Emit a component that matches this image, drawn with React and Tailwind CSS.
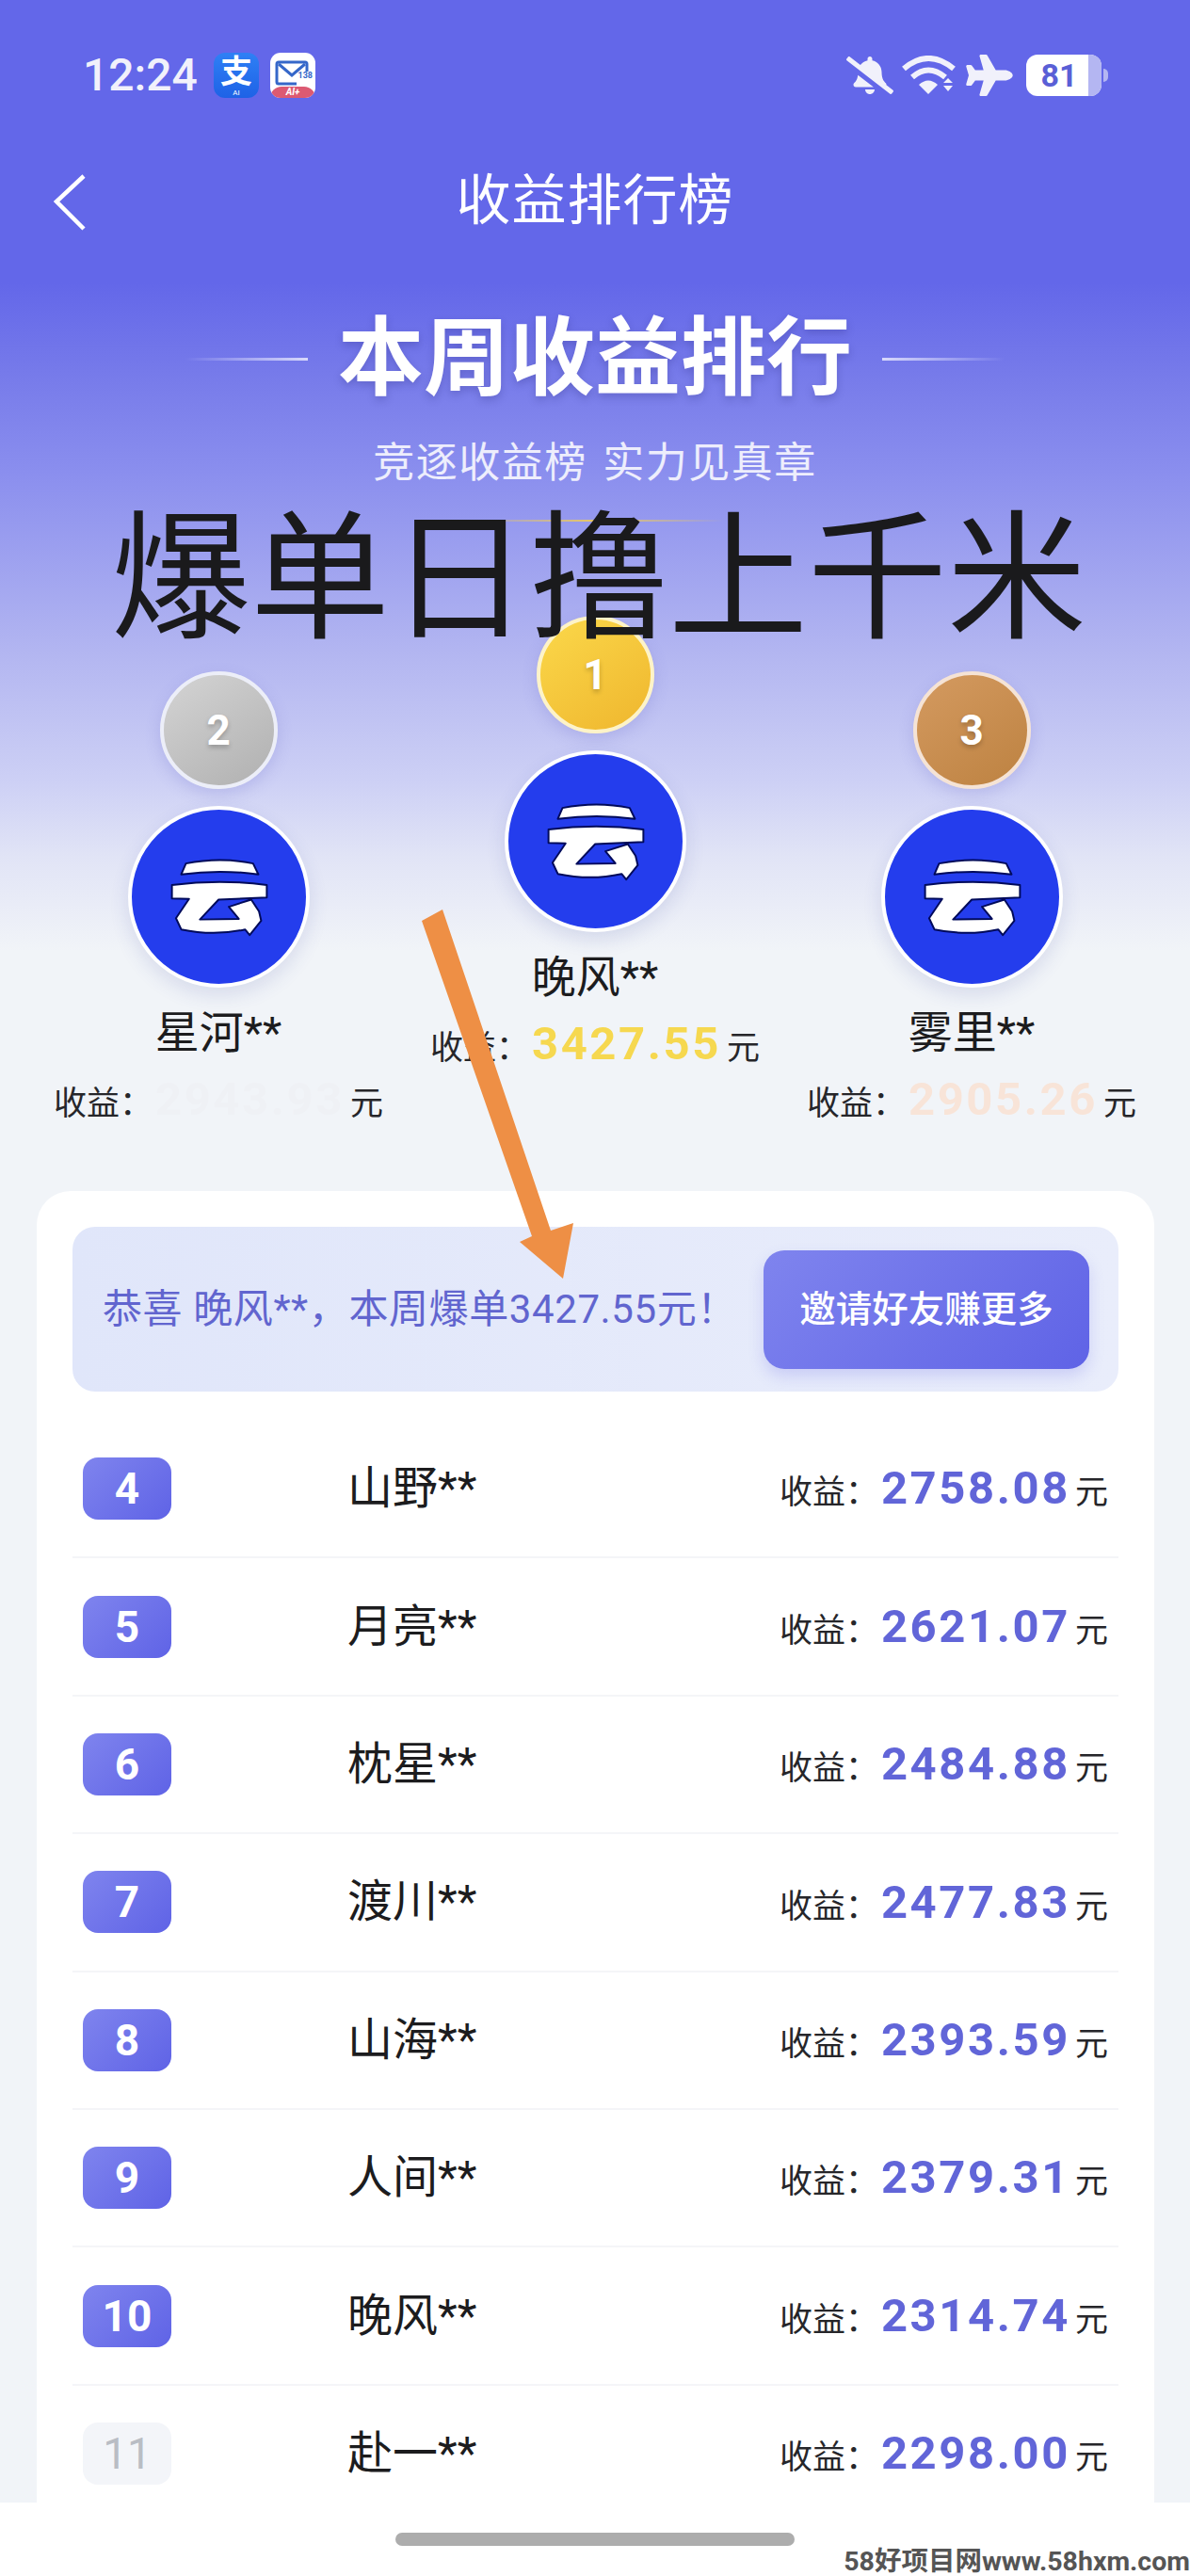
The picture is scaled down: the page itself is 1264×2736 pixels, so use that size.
import React from "react";
import { FaBellSlash, FaPlane } from "react-icons/fa";

const rows = [
  ["4", "山野**", "2758.08"],
  ["5", "月亮**", "2621.07"],
  ["6", "枕星**", "2484.88"],
  ["7", "渡川**", "2477.83"],
  ["8", "山海**", "2393.59"],
  ["9", "人间**", "2379.31"],
  ["10", "晚风**", "2314.74"],
  ["11", "赴一**", "2298.00"],
];

function Logo() {
  return (
    <svg viewBox="56 473 560 560" className="w-full h-full">
      <g fill="#ffffff" stroke="#000a5a" strokeWidth="6" strokeLinejoin="round">
        <path d="M215 681 L230 646 Q340 624 446 646 L463 681 Q340 664 215 681Z" />
        <path d="M185 715 Q340 695 490 715 L490 755 L335 762 L275 826 L400 824 L368 785 L440 762 L465 800 L472 830 L435 876 L420 858 Q320 880 215 858 L198 822 L240 760 L185 758Z" />
      </g>
    </svg>
  );
}

function Medal({ n, cls, ring }) {
  return (
    <div className={`w-[125px] h-[125px] rounded-full border-[4px] ${ring} ${cls} flex items-center justify-center shadow-[0_6px_16px_rgba(99,102,200,0.22)]`}>
      <span className="text-white font-bold text-[44px] leading-none [text-shadow:0_3px_5px_rgba(0,0,0,0.22)]">{n}</span>
    </div>
  );
}

function Podium({ n, cls, ring, name, value, color, top }) {
  return (
    <div className={`flex flex-col items-center ${top}`}>
      <Medal n={n} cls={cls} ring={ring} />
      <div className="mt-[18px] w-[193px] h-[193px] rounded-full border-[4px] border-white bg-[#243ded] shadow-[0_8px_20px_rgba(60,70,160,0.14)] overflow-hidden">
        <Logo />
      </div>
      <div className="mt-[18px] h-[60px] leading-[60px] text-[47px] text-[#1c1c1e]">{name}</div>
      <div className="mt-[4px] h-[60px] flex items-baseline justify-center whitespace-nowrap text-[#26262a]">
        <span className="text-[35px] mr-[18px] w-[90px]">收益：</span>
        <span className={`text-[49px] font-bold tracking-[2.6px] ${color}`}>{value}</span>
        <span className="text-[35px] ml-[6px]">元</span>
      </div>
    </div>
  );
}

export default function App() {
  return (
    <div className="relative w-[1264px] h-[2736px] overflow-hidden bg-[#f1f4f8] font-[Roboto,'Noto_Sans_CJK_SC',sans-serif]">
      <div className="absolute inset-x-0 top-0 h-[1010px] bg-[linear-gradient(180deg,#6367e9_0px,#6367e9_300px,#777bea_400px,#8a8eee_500px,#b4b7f1_700px,#cdd0f5_830px,#e1e4f6_910px,#f1f4f8_1010px)]" />

      <div className="relative">
        {/* status bar */}
        <div className="h-[160px] flex items-center justify-between pl-[88px] pr-[87px]">
          <div className="flex items-center">
            <span className="text-[48px] font-medium text-[#f1f1fb] leading-none w-[139px]">12:24</span>
            <div className="relative w-[48px] h-[48px] rounded-[12px] bg-[linear-gradient(180deg,#2f80f5,#1e62e6)] flex items-start justify-center overflow-hidden">
              <span className="text-white font-bold text-[34px] leading-[40px]">支</span>
              <span className="absolute bottom-0 text-white text-[8px] leading-[10px]">AI</span>
            </div>
            <div className="relative ml-[12px] w-[48px] h-[48px] rounded-[11px] bg-white overflow-hidden">
              <svg viewBox="0 0 48 48" className="absolute inset-0 w-full h-full">
                <path d="M37 10 H9 a2 2 0 0 0-2 2 V31 a2 2 0 0 0 2 2 H28" fill="none" stroke="#3567c9" strokeWidth="3" />
                <path d="M9 12 L23 24 L37 12" fill="none" stroke="#3567c9" strokeWidth="3" />
                <path d="M37 10 a2 2 0 0 1 2 2 V20" fill="none" stroke="#3567c9" strokeWidth="3" />
              </svg>
              <span className="absolute right-[3px] top-[19px] text-[9px] leading-[10px] font-bold text-[#3567c9]">138</span>
              <div className="absolute inset-x-0 bottom-0 h-[12px] rounded-t-[12px] bg-[#dc5a72] text-center text-white text-[10px] leading-[12px] font-bold italic">AI+</div>
            </div>
          </div>
          <div className="flex items-center">
            <FaBellSlash className="w-[50px] h-[44px] text-[#f1f1fb]" />
            <svg viewBox="0 0 60 42" className="ml-[8px] w-[60px] h-[42px]">
              <g fill="none" stroke="#f1f1fb" strokeWidth="6">
                <path d="M3 14 Q29 -8 56 14" />
                <path d="M12 23 Q29 8 47 23" />
              </g>
              <path d="M19 31 Q29 22 39 31 L29 41Z" fill="#f1f1fb" />
              <path d="M50 24 L55 29 H45Z M45 32 H55 L50 38Z" fill="#f1f1fb" />
            </svg>
            <FaPlane className="ml-[8px] w-[52px] h-[44px] text-[#f1f1fb]" />
            <div className="ml-[13px] flex items-center">
              <div className="relative w-[80px] h-[44px] rounded-[12px] bg-white overflow-hidden flex items-center justify-center pr-[10px]">
                <span className="text-[#5a5fd6] text-[34px] font-bold leading-none">81</span>
                <div className="absolute right-0 inset-y-0 w-[14px] bg-[#b4b6f2]" />
              </div>
              <div className="ml-[2px] w-[5px] h-[14px] rounded-r-full bg-[#b4b6f2]" />
            </div>
          </div>
        </div>

        {/* nav */}
        <div className="relative h-[106px] flex items-center justify-center">
          <svg viewBox="0 0 36 62" className="absolute left-[56px] top-[24px] w-[36px] h-[62px]">
            <path d="M33 3 L4 30 L33 59" fill="none" stroke="#ffffff" strokeWidth="4.5" />
          </svg>
          <span className="text-[58px] tracking-[1px] text-white leading-none">收益排行榜</span>
        </div>

        {/* heading */}
        <div className="mt-[65px] h-[100px] flex items-center justify-center">
          <div className="w-[130px] h-[3px] bg-[linear-gradient(90deg,transparent,#d8d9fb)]" />
          <span className="mx-[32px] text-[91px] leading-none font-bold text-white [text-shadow:0_4px_8px_rgba(40,40,120,0.25)]">本周收益排行</span>
          <div className="w-[130px] h-[3px] bg-[linear-gradient(90deg,#d8d9fb,transparent)]" />
        </div>
        <div className="mt-[31px] h-[60px] leading-[60px] text-center text-[44px] tracking-[1.5px] [word-spacing:4px] text-white/85">竞逐收益榜 实力见真章</div>
        <div className="mt-[30px] mx-auto w-[274px] h-[2px] bg-[linear-gradient(90deg,transparent,#e8c765,transparent)]" />

        {/* podium */}
        <div className="mt-[100px] px-[32px] grid grid-cols-3">
          <Podium top="pt-[59px]" n="2" cls="bg-[linear-gradient(145deg,#d4d4d4,#b0b0b0)]" ring="border-[#eceef8]" name="星河**" value="2943.93" color="text-[#eff1f5]" />
          <Podium top="" n="1" cls="bg-[linear-gradient(145deg,#fbd84a,#efb62e)]" ring="border-[#fdf3c8]" name="晚风**" value="3427.55" color="text-[#f6d84f]" />
          <Podium top="pt-[59px]" n="3" cls="bg-[linear-gradient(145deg,#d49a60,#bd8241)]" ring="border-[#f5e3d5]" name="雾里**" value="2905.26" color="text-[#f8e4d8]" />
        </div>

        {/* card */}
        <div className="mt-[74px] mx-[39px] w-[1187px] rounded-t-[36px] bg-white pt-[38px] px-[38px]">
          <div className="h-[175px] rounded-[24px] bg-[linear-gradient(90deg,#e0e6fa,#e9edfb)] flex items-center justify-between pl-[32px] pr-[31px]">
            <span className="text-[42px] tracking-[0.6px] text-[#6165cf] whitespace-nowrap">恭喜 晚风**，本周爆单3427.55元！</span>
            <div className="w-[346px] h-[126px] rounded-[22px] bg-[linear-gradient(135deg,#7f84ee,#5f63e6)] shadow-[0_8px_16px_rgba(99,102,230,0.22)] flex items-center justify-center text-white text-[38.5px] font-medium">邀请好友赚更多</div>
          </div>
          <div className="mt-[31px]">
            {rows.map(([n, name, value], i) => (
              <div key={n} className="h-[146.4px] flex items-center border-b-2 border-[#f4f5f8]">
                <div className={`ml-[11px] w-[94px] h-[66px] rounded-[16px] flex items-center justify-center text-[46px] leading-none ${i === 7 ? "bg-[#f3f5f9] text-[#b9bdc4]" : "bg-[linear-gradient(135deg,#7f84ee,#5f63e6)] text-white font-bold"}`}>{n}</div>
                <div className="ml-[187px] text-[48px] text-[#1c1c1e] leading-none">{name}</div>
                <div className="ml-auto mr-[11px] flex items-baseline whitespace-nowrap text-[#26262a]">
                  <span className="text-[35px] w-[108px]">收益：</span>
                  <span className="text-[49px] font-bold tracking-[2.6px] text-[#6165d8]">{value}</span>
                  <span className="text-[35px] ml-[5px]">元</span>
                </div>
              </div>
            ))}
          </div>
        </div>
      </div>

      {/* overlay slogan */}
      <div className="absolute left-[118px] top-[523px] text-[148px] leading-[185px] text-[#1a1a1c] whitespace-nowrap">爆单日撸上千米</div>

      {/* orange arrow */}
      <svg viewBox="0 0 1264 2736" className="absolute inset-0 w-[1264px] h-[2736px] pointer-events-none">
        <polygon points="448,978 470,966 585,1307 609,1299 598,1358 552,1319 565,1313" fill="#ee8f45" />
      </svg>

      {/* bottom bar */}
      <div className="absolute inset-x-0 bottom-0 h-[78px] bg-white flex justify-center pt-[32px]">
        <div className="w-[424px] h-[14px] rounded-full bg-[#adadad]" />
      </div>
      <div className="absolute right-0 bottom-0 text-[28.5px] leading-[30px] font-bold text-[#555] whitespace-nowrap">58好项目网www.58hxm.com</div>
    </div>
  );
}
